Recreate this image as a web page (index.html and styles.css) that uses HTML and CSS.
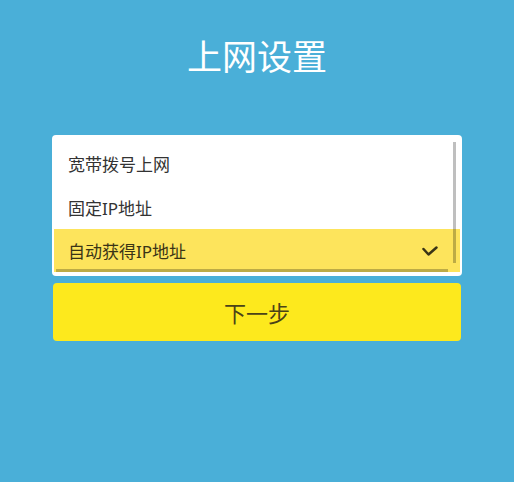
FILE: index.html
```html
<!DOCTYPE html>
<html>

<head>
  <meta charset="utf-8">
  <meta name="viewport" content="width=device-width, initial-scale=1">
  <title>上网设置</title>
  <link rel="stylesheet" href="styles.css">
</head>

<body>
	<div class="page">
		<h1 class="title">上网设置</h1>

		<div class="picker">
			<ul class="options">
				<li class="option">宽带拨号上网</li>
				<li class="option">固定IP地址</li>
				<li class="option selected">
					<span>自动获得IP地址</span>
					<svg class="check" width="16" height="12" viewBox="0 0 16 12">
						<polyline points="1.5,4 6.5,9.5 14.5,2.5" fill="none" stroke="#3a3416" stroke-width="2.5" stroke-linecap="round" stroke-linejoin="round"/>
					</svg>
				</li>
			</ul>
			<div class="scroll-v"></div>
			<div class="scroll-h"></div>
		</div>

		<button type="button" class="next">下一步</button>
	</div>
</body>

</html>
```

FILE: styles.css
```css
body {
	margin: 0;
	background-color: #4aafd8;
	font-family: "Noto Sans", "Noto Sans CJK SC", sans-serif;
}

.page {
	width: 410px;
	margin: 0 auto;
	padding-top: 37px;
}

.title {
	margin: 0 0 58px;
	font-size: 35px;
	line-height: 40px;
	font-weight: normal;
	color: #ffffff;
	text-align: center;
}

.picker {
	position: relative;
	height: 137px;
	padding: 2px;
	background: #ffffff;
	border-radius: 4px;
}

.options {
	list-style: none;
	margin: 0;
	padding: 4px 0 0;
}

.option {
	display: flex;
	align-items: center;
	justify-content: space-between;
	height: 44px;
	padding: 0 20px 0 14px;
	font-size: 17px;
	color: #333333;
}

.selected {
	height: 43px;
	background: #fde45c;
	color: #3a3416;
}

.check {
	margin-right: 2px;
}

.scroll-v {
	position: absolute;
	top: 7px;
	right: 6px;
	width: 3px;
	height: 121px;
	background: rgba(0, 0, 0, 0.25);
}

.scroll-h {
	position: absolute;
	left: 4px;
	bottom: 4px;
	width: 392px;
	height: 3px;
	background: rgba(0, 0, 0, 0.25);
}

.next {
	display: block;
	width: 408px;
	height: 58px;
	margin: 7px auto 0;
	border: none;
	border-radius: 4px;
	background: #fde91d;
	color: #4a4218;
	font-family: "Noto Sans", "Noto Sans CJK SC", sans-serif;
	font-size: 22px;
}
```
